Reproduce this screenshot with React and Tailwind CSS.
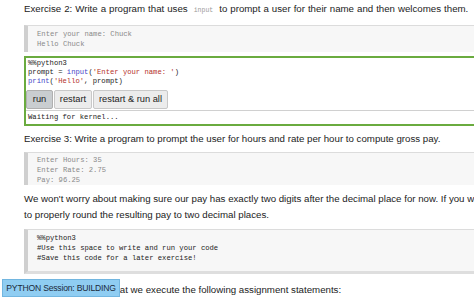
import React from 'react';

const sans = { fontFamily: '"Liberation Sans", Arial, sans-serif' };
const mono = "font-['Liberation_Mono',monospace]";

export default function App() {
  return (
    <div className="relative w-[474px] h-[298px] overflow-hidden bg-white" style={sans}>
      <div className="w-[560px] pl-[24px] pt-[2px] text-[9.7px] text-[#222] whitespace-nowrap">
        <p className="leading-[14px] [word-spacing:0.3px]">
          Exercise 2: Write a program that uses{' '}
          <code className={`${mono} text-[6.5px] text-[#9a9a9a] px-[3px] [word-spacing:0]`}>input</code>{' '}
          to prompt a user for their name and then welcomes them.
        </p>

        <div className={`mt-[7px] h-[27px] border-l-[4px] border-l-[#cfcfcf] border-t border-t-[#dcdcdc] bg-[#f7f7f7] pl-[9px] pt-[3px] ${mono} text-[7.2px] leading-[10px] text-[#8a8a8a] whitespace-pre`}>
          <div>Enter your name: Chuck</div>
          <div>Hello Chuck</div>
        </div>

        <div className="mt-[4px] h-[70px] border-[2px] border-[#6aab3f] bg-white flex flex-col">
          <div className={`px-[2px] pt-[1px] ${mono} text-[7.2px] leading-[9px] text-[#222] whitespace-pre`}>
            <div>%%python3</div>
            <div>
              prompt = <span className="text-[#4646c8]">input</span>(<span className="text-[#b4322a]">'Enter your name: '</span>)
            </div>
            <div>
              <span className="text-[#4646c8]">print</span>(<span className="text-[#b4322a]">'Hello'</span>, prompt)
            </div>
          </div>
          <div className="mt-[4px] flex gap-[1px] text-[9.3px] text-[#222]">
            <button className="w-[27px] h-[19px] bg-[#c9cdd0] border border-[#b0b0b0] rounded-[2px]">run</button>
            <button className="w-[38px] h-[19px] bg-[#ececec] border border-[#c8c8c8] rounded-[2px]">restart</button>
            <button className="w-[75px] h-[19px] bg-[#ececec] border border-[#c8c8c8] rounded-[2px]">restart &amp; run all</button>
          </div>
          <div className={`mt-[1px] border-t border-[#d0d0d0] px-[2px] pt-[2px] ${mono} text-[7.2px] leading-[9px] text-[#222]`}>
            Waiting for kernel...
          </div>
        </div>

        <p className="mt-[6px] leading-[14px]">
          Exercise 3: Write a program to prompt the user for hours and rate per hour to compute gross pay.
        </p>

        <div className={`mt-[6px] h-[33px] border-l-[4px] border-l-[#cfcfcf] border-t border-t-[#dcdcdc] bg-[#f7f7f7] pl-[9px] pt-[2px] ${mono} text-[7.2px] leading-[10px] text-[#8a8a8a] whitespace-pre`}>
          <div>Enter Hours: 35</div>
          <div>Enter Rate: 2.75</div>
          <div>Pay: 96.25</div>
        </div>

        <p className="mt-[6px] leading-[16px]">
          We won't worry about making sure our pay has exactly two digits after the decimal place for now. If you want
          <br />
          to properly round the resulting pay to two decimal places.
        </p>

        <div className={`mt-[6px] h-[45px] border-l-[4px] border-l-[#cfcfcf] border-t border-t-[#dcdcdc] border-b-[3px] border-b-[#dedede] bg-[#f7f7f7] pl-[9px] pt-[3px] ${mono} text-[7.2px] leading-[10px] text-[#222] whitespace-pre`}>
          <div>%%python3</div>
          <div>#Use this space to write and run your code</div>
          <div>#Save this code for a later exercise!</div>
        </div>

        <p className="mt-[9px] leading-[14px]">
          Exercise 4: Assume that we execute the following assignment statements:
        </p>
      </div>

      <div className="absolute left-[2px] top-[279px] w-[118px] h-[18px] flex items-center justify-center bg-[#8fcdf2] border border-[#72b6e0] text-[8.6px] tracking-[-0.2px] text-[#1b2a3a] whitespace-nowrap">
        PYTHON Session: BUILDING
      </div>
    </div>
  );
}
